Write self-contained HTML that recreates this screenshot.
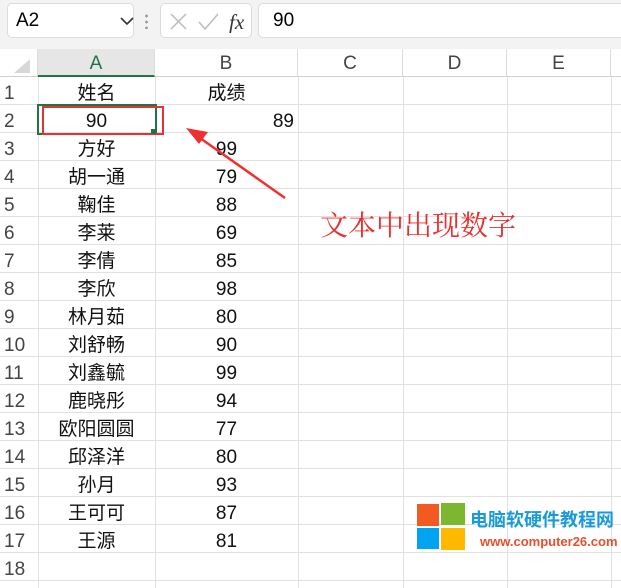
<!DOCTYPE html><html><head><meta charset="utf-8"><style>
body{margin:0;width:621px;height:560px;overflow:hidden;background:#fff;font-family:"Liberation Sans","Noto Sans CJK SC",sans-serif;position:relative}
.tb{position:absolute;left:0;top:0;width:621px;height:49px;background:#f3f3f3}
.box{position:absolute;background:#fff;border:1px solid #dcdcdc;border-radius:5px;height:33px;top:3px}
.ch{position:absolute;top:49px;height:28px;font-size:19px;color:#444;text-align:center;line-height:30px;border-right:1px solid #dcdcdc;border-bottom:1px solid #d0d0d0;box-sizing:border-box;background:#fff}
.r{position:absolute;left:0;width:621px;height:28px;border-bottom:1px solid #e1e1e1;box-sizing:border-box;font-size:19px;line-height:33px;color:#111}
.r span{position:absolute;top:0;text-align:center}
.n{left:0;width:38px;color:#444;text-align:left!important;padding-left:4px;box-sizing:border-box}
.a{left:38px;width:117px}.b{left:155px;width:143px}
.v{position:absolute;top:49px;width:1px;height:511px;background:#e1e1e1}
</style></head><body>
<div class="tb"></div>
<div class="box" style="left:7px;width:125px"><span style="position:absolute;left:8px;top:6px;font-size:19px">A2</span><svg style="position:absolute;left:112px;top:13px" width="14" height="9"><path d="M1 1l6 6 6-6" stroke="#333" stroke-width="1.6" fill="none"/></svg></div>
<div style="position:absolute;left:145px;top:13px;width:3px;height:16px;background:radial-gradient(circle,#999 1.3px,transparent 1.5px) 0 0/3px 6px"></div>
<div class="box" style="left:160px;width:90px"><svg style="position:absolute;left:8px;top:7px" width="80" height="22"><path d="M2 3l15 15M17 3L2 18" stroke="#bbb" stroke-width="1.5"/><path d="M30 11l6 7 13-15" stroke="#bbb" stroke-width="1.5" fill="none"/><text x="60" y="18" font-family="Liberation Serif" font-style="italic" font-size="21" fill="#333">fx</text></svg></div>
<div class="box" style="left:258px;width:380px"><span style="position:absolute;left:14px;top:6px;font-size:19px">90</span></div>
<div class="ch" style="left:0;width:38px;background:#fff"><svg width="38" height="28"><path d="M30 24V10L14 24z" fill="#d8d8d8"/></svg></div>
<div class="ch" style="left:38px;width:117px;background:#e6e6e6;color:#217346;border-bottom:2px solid #217346">A</div>
<div class="ch" style="left:155px;width:143px">B</div>
<div class="ch" style="left:298px;width:105px">C</div>
<div class="ch" style="left:403px;width:104px">D</div>
<div class="ch" style="left:507px;width:104px">E</div>
<div class="ch" style="left:611px;width:10px;border-right:0"></div>
<div class="v" style="left:38px;top:77px"></div><div class="v" style="left:155px;top:77px"></div><div class="v" style="left:298px;top:77px"></div><div class="v" style="left:403px;top:77px"></div><div class="v" style="left:507px;top:77px"></div><div class="v" style="left:611px;top:77px"></div>
<div class="r" style="top:77px"><span class="n">1</span><span class="a">姓名</span><span class="b">成绩</span></div>
<div class="r" style="top:105px"><span class="n">2</span><span class="a">90</span><span class="b" style="text-align:right;width:139px">89</span></div>
<div class="r" style="top:133px"><span class="n">3</span><span class="a">方好</span><span class="b">99</span></div>
<div class="r" style="top:161px"><span class="n">4</span><span class="a">胡一通</span><span class="b">79</span></div>
<div class="r" style="top:189px"><span class="n">5</span><span class="a">鞠佳</span><span class="b">88</span></div>
<div class="r" style="top:217px"><span class="n">6</span><span class="a">李莱</span><span class="b">69</span></div>
<div class="r" style="top:245px"><span class="n">7</span><span class="a">李倩</span><span class="b">85</span></div>
<div class="r" style="top:273px"><span class="n">8</span><span class="a">李欣</span><span class="b">98</span></div>
<div class="r" style="top:301px"><span class="n">9</span><span class="a">林月茹</span><span class="b">80</span></div>
<div class="r" style="top:329px"><span class="n">10</span><span class="a">刘舒畅</span><span class="b">90</span></div>
<div class="r" style="top:357px"><span class="n">11</span><span class="a">刘鑫毓</span><span class="b">99</span></div>
<div class="r" style="top:385px"><span class="n">12</span><span class="a">鹿晓彤</span><span class="b">94</span></div>
<div class="r" style="top:413px"><span class="n">13</span><span class="a">欧阳圆圆</span><span class="b">77</span></div>
<div class="r" style="top:441px"><span class="n">14</span><span class="a">邱泽洋</span><span class="b">80</span></div>
<div class="r" style="top:469px"><span class="n">15</span><span class="a">孙月</span><span class="b">93</span></div>
<div class="r" style="top:497px"><span class="n">16</span><span class="a">王可可</span><span class="b">87</span></div>
<div class="r" style="top:525px"><span class="n">17</span><span class="a">王源</span><span class="b">81</span></div>
<div class="r" style="top:553px"><span class="n">18</span></div>
<div style="position:absolute;left:37px;top:104px;width:116px;height:27px;border:2px solid #217346"></div>
<div style="position:absolute;left:42px;top:106px;width:118px;height:25px;border:2px solid #e53333"></div>
<div style="position:absolute;left:151px;top:129px;width:5px;height:5px;background:#217346"></div>
<svg style="position:absolute;left:0;top:0" width="621" height="560"><path d="M285 198L200 138" stroke="#f03030" stroke-width="2.5"/><path d="M186 128l22 4-9 12z" fill="#f03030"/></svg>
<div style="position:absolute;left:320px;top:204px;font-size:28px;color:#e83030;font-family:'Noto Serif CJK SC',serif;white-space:nowrap">文本中出现数字</div>
<div style="position:absolute;left:417px;top:504px;width:22px;height:22px;background:#f25a22"></div>
<div style="position:absolute;left:441px;top:503px;width:24px;height:22px;background:#7cb82f"></div>
<div style="position:absolute;left:417px;top:528px;width:22px;height:21px;background:#00a4ef"></div>
<div style="position:absolute;left:441px;top:528px;width:24px;height:22px;background:#ffb900"></div>
<div style="position:absolute;left:470px;top:506px;font-size:18px;font-weight:bold;color:#1a9ad6;white-space:nowrap">电脑软硬件教程网</div>
<div style="position:absolute;left:480px;top:534px;font-size:13px;font-weight:bold;color:#e8502a;white-space:nowrap">www.computer26.com</div>
</body></html>
